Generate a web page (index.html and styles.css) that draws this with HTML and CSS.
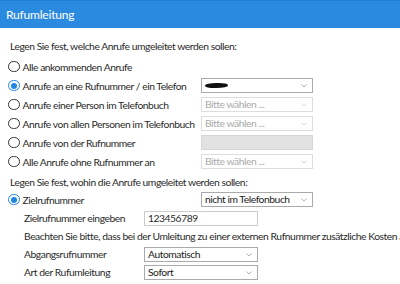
FILE: index.html
```html
<!DOCTYPE html>
<html lang="de">
<head>
  <meta charset="UTF-8">
  <title>Rufumleitung</title>
  <link rel="stylesheet" href="styles.css">
</head>
<body>
  <div class="head">Rufumleitung</div>
  <div class="content">
    <p class="intro">Legen Sie fest, welche Anrufe umgeleitet werden sollen:</p>
    <div class="row">
      <label class="opt"><span class="radio"></span>Alle ankommenden Anrufe</label>
    </div>
    <div class="row">
      <label class="opt"><span class="radio on"></span>Anrufe an eine Rufnummer / ein Telefon</label>
      <div class="sel"><span class="blot"></span><svg class="arrow" viewBox="0 0 6 4"><path d="M0.5 0.5 L3 3 L5.5 0.5"/></svg></div>
    </div>
    <div class="row">
      <label class="opt"><span class="radio"></span>Anrufe einer Person im Telefonbuch</label>
      <div class="sel off">Bitte wählen ...<svg class="arrow" viewBox="0 0 6 4"><path d="M0.5 0.5 L3 3 L5.5 0.5"/></svg></div>
    </div>
    <div class="row">
      <label class="opt"><span class="radio"></span>Anrufe von allen Personen im Telefonbuch</label>
      <div class="sel off">Bitte wählen ...<svg class="arrow" viewBox="0 0 6 4"><path d="M0.5 0.5 L3 3 L5.5 0.5"/></svg></div>
    </div>
    <div class="row">
      <label class="opt"><span class="radio"></span>Anrufe von der Rufnummer</label>
      <div class="field grey"></div>
    </div>
    <div class="row">
      <label class="opt"><span class="radio"></span>Alle Anrufe ohne Rufnummer an</label>
      <div class="sel off">Bitte wählen ...<svg class="arrow" viewBox="0 0 6 4"><path d="M0.5 0.5 L3 3 L5.5 0.5"/></svg></div>
    </div>

    <p class="intro second">Legen Sie fest, wohin die Anrufe umgeleitet werden sollen:</p>
    <div class="row">
      <label class="opt"><span class="radio on"></span>Zielrufnummer</label>
      <div class="sel">nicht im Telefonbuch<svg class="arrow" viewBox="0 0 6 4"><path d="M0.5 0.5 L3 3 L5.5 0.5"/></svg></div>
    </div>
    <div class="sub">
      <div class="subrow">
        <span class="lbl">Zielrufnummer eingeben</span>
        <div class="field">123456789</div>
      </div>
      <p class="note">Beachten Sie bitte, dass bei der Umleitung zu einer externen Rufnummer zusätzliche Kosten anfallen können.</p>
      <div class="subrow">
        <span class="lbl">Abgangsrufnummer</span>
        <div class="sel">Automatisch<svg class="arrow" viewBox="0 0 6 4"><path d="M0.5 0.5 L3 3 L5.5 0.5"/></svg></div>
      </div>
      <div class="subrow">
        <span class="lbl">Art der Rufumleitung</span>
        <div class="sel">Sofort<svg class="arrow" viewBox="0 0 6 4"><path d="M0.5 0.5 L3 3 L5.5 0.5"/></svg></div>
      </div>
    </div>
  </div>
</body>
</html>
```

FILE: styles.css
```css
body { margin: 0; font-family: Lato, "Liberation Sans", sans-serif; font-size: 10.3px; letter-spacing: -0.45px; color: #2a2a2a; background: #fff; overflow: hidden; }
.head { height: 28px; background: #2a8ae0; border-top: 1px solid #1f7fd4; color: #fff; font-size: 12px; line-height: 27px; padding-left: 6px; box-sizing: border-box; letter-spacing: -0.2px; }
.content { padding: 9px 0 0 8px; white-space: nowrap; }
.intro { margin: 2px 0 3px 2px; height: 15px; line-height: 15px; }
.intro.second { margin-top: 4px; margin-bottom: 0; }
.row { display: flex; align-items: center; height: 19px; }
.opt { display: flex; align-items: center; width: 193px; }
.radio { width: 9.5px; height: 9.5px; border: 1.5px solid #333; border-radius: 50%; margin-right: 3px; flex: none; position: relative; }
.radio.on { border-color: #1e88e5; }
.radio.on::after { content: ""; position: absolute; left: 1.75px; top: 1.75px; width: 6px; height: 6px; border-radius: 50%; background: #1e88e5; }
.sel { position: relative; width: 112px; height: 15px; box-sizing: border-box; border: 1px solid #aaa; line-height: 13px; padding-left: 3px; color: #222; background: #fff; }
.sel.off { border-color: #ddd; color: #aaa; }
.arrow { position: absolute; right: 5px; top: 5px; width: 6px; height: 4px; fill: none; stroke: #999; stroke-width: 0.8; }
.sel.off .arrow { stroke: #ccc; }
.blot { display: inline-block; width: 23px; height: 5px; background: #111; border-radius: 50% 40% 50% 40%; margin-top: 4px; vertical-align: top; }
.field { width: 114px; height: 15px; box-sizing: border-box; border: 1px solid #ccc; line-height: 13px; padding-left: 3px; }
.field.grey { width: 112px; background: #e2e2e2; border-color: #d6d6d6; }
.sub { padding-left: 16px; }
.subrow { display: flex; align-items: center; height: 18px; }
.lbl { width: 120px; }
.subrow .sel { width: 114px; }
.note { margin: 0; height: 18px; line-height: 18px; }
```
